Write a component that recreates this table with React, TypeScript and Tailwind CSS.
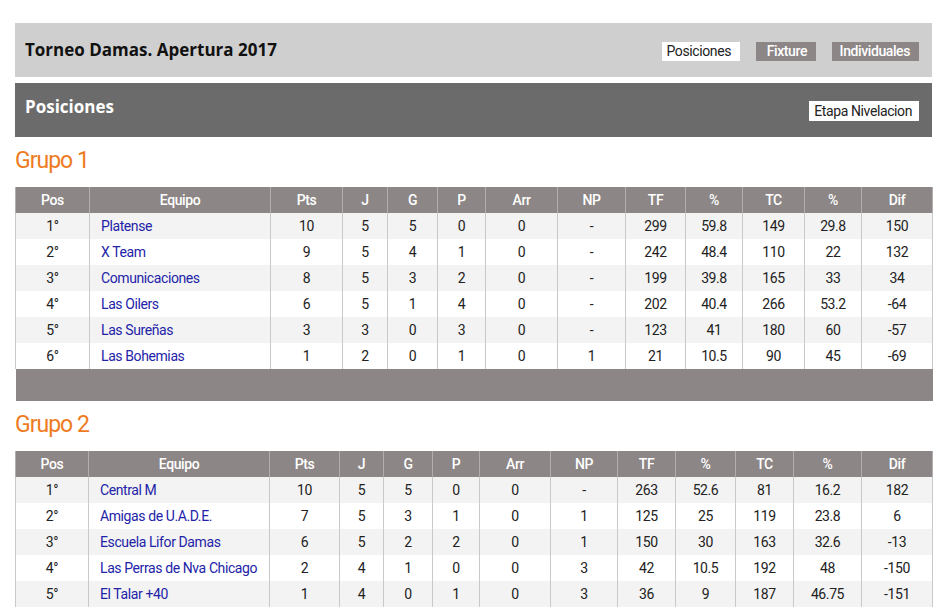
const cond = { fontFamily: 'Roboto, "Liberation Sans", sans-serif' };
const wide = { fontFamily: '"Open Sans", "DejaVu Sans", sans-serif' };

type Row = [string, string, string, string, string, string, string, string, string, string, string, string, string];

const heads = ["Pos", "Equipo", "Pts", "J", "G", "P", "Arr", "NP", "TF", "%", "TC", "%", "Dif"];

const grupo1: Row[] = [
  ["1°", "Platense", "10", "5", "5", "0", "0", "-", "299", "59.8", "149", "29.8", "150"],
  ["2°", "X Team", "9", "5", "4", "1", "0", "-", "242", "48.4", "110", "22", "132"],
  ["3°", "Comunicaciones", "8", "5", "3", "2", "0", "-", "199", "39.8", "165", "33", "34"],
  ["4°", "Las Oilers", "6", "5", "1", "4", "0", "-", "202", "40.4", "266", "53.2", "-64"],
  ["5°", "Las Sureñas", "3", "3", "0", "3", "0", "-", "123", "41", "180", "60", "-57"],
  ["6°", "Las Bohemias", "1", "2", "0", "1", "0", "1", "21", "10.5", "90", "45", "-69"],
];

const grupo2: Row[] = [
  ["1°", "Central M", "10", "5", "5", "0", "0", "-", "263", "52.6", "81", "16.2", "182"],
  ["2°", "Amigas de U.A.D.E.", "7", "5", "3", "1", "0", "1", "125", "25", "119", "23.8", "6"],
  ["3°", "Escuela Lifor Damas", "6", "5", "2", "2", "0", "1", "150", "30", "163", "32.6", "-13"],
  ["4°", "Las Perras de Nva Chicago", "2", "4", "1", "0", "0", "3", "42", "10.5", "192", "48", "-150"],
  ["5°", "El Talar +40", "1", "4", "0", "1", "0", "3", "36", "9", "187", "46.75", "-151"],
];

const cols1 = ["w-[74px]", "w-[181px]", "w-[72px]", "w-[45px]", "w-[50px]", "w-[48px]", "w-[72px]", "w-[68px]", "w-[60px]", "w-[57px]", "w-[62px]", "w-[57px]", "w-[71px]"];
const cols2 = ["w-[73px]", "w-[181px]", "w-[70px]", "w-[44px]", "w-[49px]", "w-[47px]", "w-[71px]", "w-[67px]", "w-[58px]", "w-[60px]", "w-[58px]", "w-[68px]", "w-[71px]"];

function Tabla({ rows, cols }: { rows: Row[]; cols: string[] }) {
  return (
    <table className="w-[917px] table-fixed border-collapse text-[14px] leading-[26px] tracking-[-0.4px]" style={cond}>
      <colgroup>
        {cols.map((c, i) => (
          <col key={i} className={c} />
        ))}
      </colgroup>
      <thead>
        <tr className="bg-[#8c8686] text-white">
          {heads.map((h, i) => (
            <th key={i} className="h-[26px] border-l border-r border-[#b3aeae] font-medium text-center p-0">
              {h}
            </th>
          ))}
        </tr>
      </thead>
      <tbody>
        {rows.map((r, ri) => (
          <tr key={ri} className={ri % 2 === 0 ? "bg-[#f3f3f3]" : "bg-white"}>
            {r.map((v, ci) => (
              <td
                key={ci}
                className={
                  ci === 1
                    ? "h-[26px] border-l border-r border-[#c9c9c9] text-left pl-[11px] text-[#2323a8] p-0 whitespace-nowrap"
                    : "h-[26px] border-l border-r border-[#c9c9c9] text-center text-[#222] p-0"
                }
              >
                {v}
              </td>
            ))}
          </tr>
        ))}
        <tr>
          <td colSpan={13} className="h-[32px] bg-[#8c8686] p-0" />
        </tr>
      </tbody>
    </table>
  );
}

function Grupo({ title }: { title: string }) {
  return (
    <div className="h-[50px] pt-[9px] text-[23px] leading-[30px] tracking-[-1px] text-[#ee7b22]" style={cond}>
      {title}
    </div>
  );
}

export default function App() {
  return (
    <div className="min-h-screen bg-white pt-[23px]">
      <div className="ml-[15px] w-[917px]">
        <div className="h-[54px] bg-[#d0cfcf] flex items-center justify-between pl-[10px] pr-[13px]">
          <div className="text-[17px] font-bold text-[#111]" style={wide}>
            Torneo Damas. Apertura 2017
          </div>
          <div className="flex gap-[16px] mt-[3px] text-[14px] leading-[19px] tracking-[-0.4px] whitespace-nowrap" style={cond}>
            <div className="w-[78px] h-[19px] bg-white text-[#222] text-right pr-[9px]">Posiciones</div>
            <div className="w-[60px] h-[19px] bg-[#8c8686] text-white font-medium text-right pr-[9px]">Fixture</div>
            <div className="w-[87px] h-[19px] bg-[#8c8686] text-white font-medium text-right pr-[9px]">Individuales</div>
          </div>
        </div>
        <div className="mt-[6px] h-[54px] bg-[#6b6b6b] flex items-center justify-between pl-[10px] pr-[13px]">
          <div className="text-[17px] font-bold text-white -mt-[6px]" style={wide}>
            Posiciones
          </div>
          <div
            className="w-[110px] h-[20px] bg-white text-[#222] text-[14px] leading-[20px] tracking-[-0.4px] whitespace-nowrap text-right pr-[7px] mt-[2px]"
            style={cond}
          >
            Etapa Nivelacion
          </div>
        </div>
        <Grupo title="Grupo 1" />
        <Tabla rows={grupo1} cols={cols1} />
        <Grupo title="Grupo 2" />
        <Tabla rows={grupo2} cols={cols2} />
      </div>
    </div>
  );
}
